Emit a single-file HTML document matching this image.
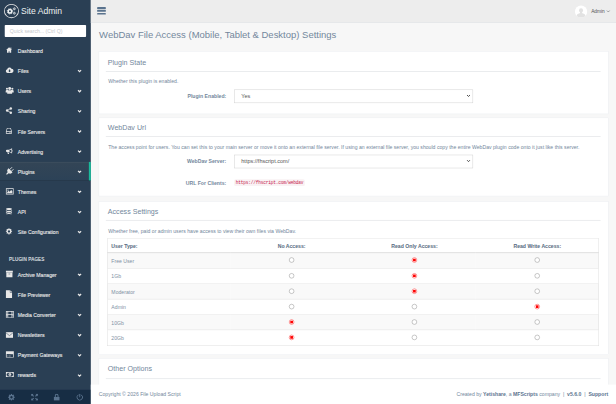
<!DOCTYPE html>
<html lang="en">
<head>
<meta charset="utf-8">
<title>Site Admin</title>
<style>
*{box-sizing:border-box}
html,body{margin:0;padding:0;width:616px;height:404px;overflow:hidden;background:#F7F7F7}
#stage{position:absolute;left:0;top:0;width:1560px;height:1023px;transform-origin:0 0;transform:scale(0.39487);font-family:"Liberation Sans",Arial,sans-serif;font-size:13px;color:#73879C;line-height:1.471;background:#F7F7F7;overflow:hidden}
/* sidebar */
#side{position:absolute;left:0;top:0;width:230px;height:1023px;background:#2A3F54;color:#ECF0F1}
.logo{position:absolute;left:10px;top:10px;height:38px;width:220px}
.logo .ic{position:absolute;left:0;top:0;width:38px;height:36px;border:2px solid #EAEAEA;border-radius:50%}.logo .ic svg{position:absolute;left:0;top:-1px}
.logo .tx{position:absolute;left:43px;top:-0.2px;font-size:21.8px;line-height:36px;color:#ECF0F1;white-space:nowrap}
.search{position:absolute;left:12px;top:63px;width:206px;height:31px;background:#fff;border-radius:2px;padding-left:13px;font-size:13px;line-height:31px;color:#C4C8CD}
ul.menu{position:absolute;left:0;top:104px;width:230px;margin:0;padding:0;list-style:none}
ul.menu li{position:relative;height:51px;font-size:13px;font-weight:bold;color:#E7E7E7}
ul.menu li .t{position:absolute;left:45px;top:1px;line-height:47px;white-space:nowrap;font-weight:normal;font-size:13px;-webkit-text-stroke:0.3px #E7E7E7}
ul.menu li svg.i{position:absolute;left:14px;top:12px;width:22px;height:22px;fill:#E7E7E7;overflow:visible}
ul.menu li svg.c{position:absolute;left:195px;top:18px;width:13px;height:13px;fill:none;stroke:#E7E7E7;stroke-width:2.8}
ul.menu li.act:before{content:"";position:absolute;left:0;top:0;width:225px;height:47px;background:linear-gradient(#334556,#2C4257);box-shadow:rgba(0,0,0,.25) 0 1px 0,inset rgba(255,255,255,.16) 0 1px 0;border-right:5px solid #1ABB9C}
h3.sec{position:absolute;left:23px;top:648px;margin:0;font-size:11.5px;letter-spacing:.4px;font-weight:normal;-webkit-text-stroke:.3px #E4E8EC;color:#E4E8EC;text-transform:uppercase;line-height:18px}
#m2{top:671px}
.sfoot{position:absolute;left:0;top:987px;width:230px;height:36px;background:#172D44}
.sfoot svg{position:absolute;fill:#5A738E}
/* top */
#top{position:absolute;left:230px;top:0;width:1330px;height:58px;background:#EDEDED;border-bottom:1px solid #D9DEE4}
.burger{position:absolute;left:16px;top:18px;width:22px;height:20px}
.burger i{display:block;height:4.6px;background:#5A738E;margin-bottom:2.7px;border-radius:1px}
.user{position:absolute;right:14px;top:18px;font-size:12.2px;color:#515356;line-height:20px}
.avatar{position:absolute;left:1226px;top:14px;width:31px;height:31px;border-radius:50%;background:#fff;overflow:hidden}
/* main */
h1.pt{position:absolute;left:251px;top:68px;margin:0;font-size:24px;font-weight:normal;color:#73879C;line-height:38px;white-space:nowrap}
.panel{position:absolute;left:250px;width:1291px;background:#fff;border:1px solid #E6E9ED}
.panel h2{position:absolute;left:22px;top:13px;margin:0;font-size:18px;font-weight:normal;line-height:26px;color:#73879C}
.panel .hr{position:absolute;left:17px;right:19px;top:48px;height:2px;background:#E5E7EA}
.panel p{position:absolute;left:23px;top:64.5px;margin:0;font-size:13px;white-space:nowrap;line-height:19px}
.lbl{position:absolute;width:302px;text-align:right;font-weight:bold;font-size:13px;line-height:20px;color:#73879C}
.sel{position:absolute;left:343px;width:603.5px;height:34px;border:1.6px solid #c6c6c6;background:#fff;font-size:14px;line-height:31px;padding-left:16px;color:#555}
.sel svg{position:absolute;right:5px;top:9px;width:11px;height:11px;fill:none;stroke:#444;stroke-width:2.7}
code{position:absolute;left:342px;font-family:"Liberation Mono",monospace;font-size:11.4px;letter-spacing:-0.5px;color:#C7254E;background:#F9F2F4;padding:1px 4px;border-radius:4px;line-height:15px}
table{position:absolute;left:20px;top:92px;width:1246px;border-collapse:collapse;font-size:13px;table-layout:fixed}
th,td{height:39.1px;width:25%;border-top:1px solid #ddd;padding:0 10px;text-align:center;vertical-align:middle}
table{border:1.5px solid #d6d6d6}
th{font-weight:bold;color:#5C7085;-webkit-text-stroke:.15px #5C7085;border-bottom:2.5px solid #d8d8d8;height:36px}
th:first-child,td:first-child{text-align:left;padding-left:10px}th{padding-top:2px}tr.f td{height:40.1px}
tr.o td{background:#F9F9F9}td{padding-top:2.5px;color:#7E90A3}
.r{position:relative;top:-3.2px;display:inline-block;width:13px;height:13px;border:1px solid #767676;border-radius:50%;background:#fff;vertical-align:middle}
.r.on{border:1.5px solid #FF0000;background:radial-gradient(circle,#FF0000 0,#FF0000 3.3px,#fff 3.8px)}
#foot{position:absolute;left:230px;top:974px;width:1330px;height:50px;background:#fff;font-size:13px;line-height:20px}
#foot .l{position:absolute;left:20px;top:14px}
#foot .rr{position:absolute;right:20px;top:14px}
#foot b{color:#5A738E}
</style>
</head>
<body>
<div id="stage">
  <div id="side">
    <div class="logo"><div class="ic"><svg viewBox="0 0 38 38" width="34" height="34"><g fill="none" stroke="#ECF0F1"><circle cx="14.7" cy="19.7" r="5" stroke-width="4.4"/><circle cx="14.7" cy="19.7" r="7.6" stroke-width="2.2" stroke-dasharray="3 3"/><circle cx="27.2" cy="12.6" r="2.3" stroke-width="2.3"/><circle cx="27.2" cy="12.6" r="3.6" stroke-width="1.2" stroke-dasharray="1.4 1.4"/><circle cx="27.2" cy="25" r="2.3" stroke-width="2.3"/><circle cx="27.2" cy="25" r="3.6" stroke-width="1.2" stroke-dasharray="1.4 1.4"/></g></svg></div><div class="tx">Site Admin</div></div>
    <div class="search">Quick search... (Ctrl Q)</div>
    <ul class="menu" id="m1">
      <li><svg class="i" viewBox="0 0 22 22"><path d="M9 3.8 L1.6 10.6 h2.100 V17.6 h4.300 v-3.800 h2 v3.800 h4.300 V10.600 h2.100 z M12.600 4.500 h2 v4 l-2 -1.900z"/></svg><span class="t">Dashboard</span></li>
      <li><svg class="i" viewBox="0 0 22 22"><path d="M5.5 17.7 A4.6 4.6 0 0 1 4.400 8.600 A5.700 5.700 0 0 1 15 7.100 A5.100 5.100 0 0 1 15 17.700 z"/><path d="M10.300 16 l-3.400 -3.900 h2.100 v-3.200 h2.600 v3.200 h2.100z" fill="#2A3F54"/></svg><span class="t">Files</span><svg class="c" viewBox="0 0 12 12"><path d="M2.4 4.200 l3.600 3.600 l3.600 -3.600"/></svg></li>
      <li><svg class="i" viewBox="0 0 22 22"><circle cx="10.500" cy="6.300" r="3.700"/><path d="M4.300 19.600 v-4.600 a4.400 4.400 0 0 1 4.400 -4.400 h3.600 a4.400 4.400 0 0 1 4.400 4.400 v4.600z"/><circle cx="3.700" cy="7" r="2.600"/><circle cx="17.300" cy="7" r="2.600"/><path d="M0.400 16.300 v-3.600 a3 3 0 0 1 3 -3 h3.600 v6.600z M20.600 16.300 v-3.600 a3 3 0 0 0 -3 -3 h-3.600 v6.600z"/></svg><span class="t">Users</span><svg class="c" viewBox="0 0 12 12"><path d="M2.4 4.200 l3.600 3.600 l3.600 -3.600"/></svg></li>
      <li><svg class="i" viewBox="0 0 22 22"><circle cx="4" cy="11" r="3.100"/><circle cx="13.400" cy="5.600" r="3.100"/><circle cx="13.400" cy="16.400" r="3.100"/><path d="M4 11 L13.400 5.600 M4 11 L13.400 16.400" stroke="#E7E7E7" stroke-width="1.900" fill="none"/></svg><span class="t">Sharing</span><svg class="c" viewBox="0 0 12 12"><path d="M2.4 4.200 l3.600 3.600 l3.600 -3.600"/></svg></li>
      <li><svg class="i" viewBox="0 0 22 22"><path d="M3.600 4 h9.800 l2.600 8.300 v6.200 h-15 v-6.200z M4.900 5.700 l-2 6.300 h11.200 l-2 -6.300z M2.700 13.700 v3.100 h11.600 v-3.100z M9.500 14.600 v1.300 h1.300 v-1.300z M11.700 14.600 v1.300 h1.300 v-1.300z" fill-rule="evenodd"/></svg><span class="t" style="top:3px">File Servers</span><svg class="c" viewBox="0 0 12 12"><path d="M2.4 4.200 l3.600 3.600 l3.600 -3.600"/></svg></li>
      <li><svg class="i" viewBox="0 0 22 22"><path d="M16.600 4.500 v13.500 l-7.600 -4 h-5.300 a2.600 2.600 0 0 1 -2.600 -2.600 v-.8 a2.600 2.600 0 0 1 2.600 -2.600 h5.300z M14.900 7.300 l-5 2.500 v2.800 l5 2.500z" fill-rule="evenodd"/><path d="M4.300 14.300 h3.400 l1.600 4.800 h-3.300z"/><rect x="17.200" y="9.300" width="1.500" height="3.600" rx=".7"/></svg><span class="t" style="top:3px">Advertising</span><svg class="c" viewBox="0 0 12 12"><path d="M2.4 4.200 l3.600 3.600 l3.600 -3.600"/></svg></li>
      <li class="act"><svg class="i" viewBox="0 0 22 22"><path d="M11 7 L15.800 2.200 M15 11.600 L19.400 7.200" stroke="#E7E7E7" stroke-width="2.300" stroke-linecap="round" fill="none"/><path d="M7.700 4.300 L17.700 14.300 L15.900 16.100 A6.400 6.400 0 0 1 8.200 16.900 L3.300 20.600 L1.600 18.900 L5.300 14 A6.400 6.400 0 0 1 5.900 6.100 z"/></svg><span class="t" style="top:3px">Plugins</span><svg class="c" viewBox="0 0 12 12"><path d="M2.4 4.200 l3.600 3.600 l3.600 -3.600"/></svg></li>
      <li><svg class="i" viewBox="0 0 22 22"><path d="M1 3.600 h19.500 v15.900 h-19.500z M2.800 5.400 v12.300 h15.900 v-12.300z" fill-rule="evenodd"/><path d="M4.200 16.400 v-2.600 l3.500 -3.500 l2.400 2.400 l4.300 -4.700 l2.900 3.400 v5z"/><circle cx="6.400" cy="8.400" r="1.600"/></svg><span class="t" style="top:3px">Themes</span><svg class="c" viewBox="0 0 12 12"><path d="M2.4 4.200 l3.600 3.600 l3.600 -3.600"/></svg></li>
      <li><svg class="i" viewBox="0 0 22 22"><ellipse cx="8.750" cy="5.400" rx="7.750" ry="2.900"/><path d="M1 7.600 a7.750 2.900 0 0 0 15.500 0 v2.900 a7.750 2.900 0 0 1 -15.500 0z M1 12.200 a7.750 2.900 0 0 0 15.500 0 v2.900 a7.750 2.900 0 0 1 -15.500 0z M1 16.800 a7.750 2.900 0 0 0 15.500 0 v.4 a7.750 2.900 0 0 1 -15.500 0z"/></svg><span class="t">API</span><svg class="c" viewBox="0 0 12 12"><path d="M2.4 4.200 l3.600 3.600 l3.600 -3.600"/></svg></li>
      <li><svg class="i" viewBox="0 0 22 22"><path d="M7.37 4.86 L7.45 3.01 L10.05 3.01 L10.13 4.86 L11.98 5.62 L13.34 4.37 L15.18 6.21 L13.93 7.57 L14.69 9.42 L16.54 9.50 L16.54 12.10 L14.69 12.18 L13.93 14.03 L15.18 15.39 L13.34 17.23 L11.98 15.98 L10.13 16.74 L10.05 18.59 L7.45 18.59 L7.37 16.74 L5.52 15.98 L4.16 17.23 L2.32 15.39 L3.57 14.03 L2.81 12.18 L0.96 12.10 L0.96 9.50 L2.81 9.42 L3.57 7.57 L2.32 6.21 L4.16 4.37 L5.52 5.62z M8.75 7.90 a2.90 2.90 0 1 0 0.01 0z" fill-rule="evenodd"/></svg><span class="t">Site Configuration</span><svg class="c" viewBox="0 0 12 12"><path d="M2.4 4.200 l3.600 3.600 l3.600 -3.600"/></svg></li>
    </ul>
    <h3 class="sec">Plugin Pages</h3>
    <ul class="menu" id="m2">
      <li><svg class="i" viewBox="0 0 22 22"><path d="M1 2.600 h17.500 v4.400 h-17.500z M2 7.600 h15.500 v11.400 h-15.500z M7.600 10 v1.500 h4.300 v-1.500z" fill-rule="evenodd"/></svg><span class="t" style="top:3px">Archive Manager</span><svg class="c" viewBox="0 0 12 12"><path d="M2.4 4.200 l3.600 3.600 l3.600 -3.600"/></svg></li>
      <li><svg class="i" viewBox="0 0 22 22"><path d="M1 1 h10 v5.500 h5.500 v14 h-15.500z M12 1 l4.500 4.500 h-4.500z"/></svg><span class="t">File Previewer</span><svg class="c" viewBox="0 0 12 12"><path d="M2.4 4.200 l3.600 3.600 l3.600 -3.600"/></svg></li>
      <li><svg class="i" viewBox="0 0 22 22"><path d="M1 2.600 h20 v17.300 h-20z M2.600 4.200 v2.600 h2.500 v-2.600z M2.600 8.500 v2 h2.500 v-2z M2.600 12.200 v2 h2.500 v-2z M2.600 15.800 v2.500 h2.500 v-2.500z M16.900 4.200 v2.600 h2.500 v-2.600z M16.900 8.500 v2 h2.500 v-2z M16.900 12.200 v2 h2.500 v-2z M16.900 15.800 v2.500 h2.500 v-2.500z M6.800 4.200 v6 h8.400 v-6z M6.800 12.300 v6 h8.400 v-6z" fill-rule="evenodd"/></svg><span class="t">Media Converter</span><svg class="c" viewBox="0 0 12 12"><path d="M2.4 4.200 l3.600 3.600 l3.600 -3.600"/></svg></li>
      <li><svg class="i" viewBox="0 0 22 22"><path d="M1 5.200 h18 v14.300 h-18z"/><path d="M1.300 7 l8.700 7 l8.700 -7" fill="none" stroke="#2A3F54" stroke-width="1.300"/></svg><span class="t">Newsletters</span><svg class="c" viewBox="0 0 12 12"><path d="M2.4 4.200 l3.600 3.600 l3.600 -3.600"/></svg></li>
      <li><svg class="i" viewBox="0 0 22 22"><path d="M1 2.600 h20 v16 h-20z M2.800 9.500 v7.300 h16.400 v-6.600z M4.500 13.700 v1.600 h3 v-1.600z M8.800 13.700 v1.600 h4.200 v-1.600z" fill-rule="evenodd"/></svg><span class="t">Payment Gateways</span><svg class="c" viewBox="0 0 12 12"><path d="M2.4 4.200 l3.600 3.600 l3.600 -3.600"/></svg></li>
      <li><svg class="i" viewBox="0 0 22 22"><path d="M1 4.100 h20 v12.800 h-20z M2.700 5.800 v9.400 h16.600 v-9.400z M11 6.700 a3.500 3.800 0 1 0 .01 0z M10 8.500 v.9 h.6 v2.300 h-.7 v.9 h2.300 v-.9 h-.6 v-3.200z M2.700 8.300 a2.500 2.500 0 0 0 2.500 -2.500 h-2.500z M19.300 8.300 a2.500 2.500 0 0 1 -2.500 -2.500 h2.500z M2.700 12.700 a2.500 2.500 0 0 1 2.500 2.500 h-2.500z M19.300 12.700 a2.500 2.500 0 0 0 -2.500 2.500 h2.500z" fill-rule="evenodd"/></svg><span class="t">rewards</span><svg class="c" viewBox="0 0 12 12"><path d="M2.4 4.200 l3.600 3.600 l3.600 -3.600"/></svg></li>
    </ul>
    <div class="sfoot">
      <svg style="left:19.500px;top:9.500px;width:18px;height:18px" viewBox="0 0 20 20"><path d="M8.33 2.79 L8.42 0.53 L11.58 0.53 L11.67 2.79 L13.92 3.72 L15.58 2.19 L17.81 4.42 L16.28 6.08 L17.21 8.33 L19.47 8.42 L19.47 11.58 L17.21 11.67 L16.28 13.92 L17.81 15.58 L15.58 17.81 L13.92 16.28 L11.67 17.21 L11.58 19.47 L8.42 19.47 L8.33 17.21 L6.08 16.28 L4.42 17.81 L2.19 15.58 L3.72 13.92 L2.79 11.67 L0.53 11.58 L0.53 8.42 L2.79 8.33 L3.72 6.08 L2.19 4.42 L4.42 2.19 L6.08 3.72z M10.00 6.60 a3.40 3.40 0 1 0 0.01 0z" fill-rule="evenodd"/></svg>
      <svg style="left:77.500px;top:9.500px;width:19px;height:18px" viewBox="0 0 20 20"><path d="M0.500 0.500 h7 l-2.300 2.300 l3.400 3.400 l-2.400 2.400 l-3.400 -3.400 l-2.300 2.300z M19.500 0.500 v7 l-2.300 -2.300 l-3.400 3.400 l-2.400 -2.400 l3.400 -3.400 l-2.300 -2.300z M0.500 19.500 v-7 l2.300 2.300 l3.400 -3.400 l2.400 2.400 l-3.400 3.400 l2.300 2.300z M19.500 19.500 h-7 l2.300 -2.300 l-3.400 -3.400 l2.400 -2.400 l3.400 3.400 l2.300 -2.300z"/></svg>
      <svg style="left:135px;top:9.500px;width:17px;height:18px" viewBox="0 0 18 20"><path d="M1 9 h16 v10.500 h-16z M3.800 9 v-3.300 a5.200 5.200 0 0 1 10.400 0 v3.300 h-2.700 v-3.300 a2.500 2.500 0 0 0 -5 0 v3.300z"/></svg>
      <svg style="left:192.500px;top:9.500px;width:18px;height:18px" viewBox="0 0 20 20"><path d="M8.700 0.500 h2.600 v9.500 h-2.600z"/><path d="M5.300 3.600 a8 8 0 1 0 9.400 0" fill="none" stroke="#5A738E" stroke-width="2.600" stroke-linecap="round"/></svg>
    </div>
  </div>

  <div id="top">
    <div class="burger"><i></i><i></i><i></i></div>
    <div class="avatar"><svg viewBox="0 0 29 29" width="31" height="31"><circle cx="14.500" cy="11.500" r="4.800" fill="#E2E2E2"/><path d="M12 14 h5 v3.500 c2 1.500 7 1.500 8 6 v6 h-21 v-6 c1 -4.500 6 -4.500 8 -6z" fill="#E2E2E2"/></svg></div>
    <div class="user">Admin <svg width="11" height="11" viewBox="0 0 12 12" style="fill:none;stroke:#515356;stroke-width:1.500;vertical-align:-2px"><path d="M2 4 l4 4 l4 -4"/></svg></div>
  </div>

  <h1 class="pt">WebDav File Access (Mobile, Tablet &amp; Desktop) Settings</h1>

  <div class="panel" style="top:130px;height:158.5px">
    <h2 style="top:14px">Plugin State</h2><div class="hr" style="top:49px"></div>
    <p>Whether this plugin is enabled.</p>
    <div class="lbl" style="left:20px;top:103px">Plugin Enabled:</div>
    <div class="sel" style="top:95.5px">Yes<svg viewBox="0 0 12 12"><path d="M2 4 l4 4 l4 -4"/></svg></div>
  </div>

  <div class="panel" style="top:298px;height:199px">
    <h2 style="top:10px">WebDav Url</h2><div class="hr" style="top:45.5px"></div>
    <p style="top:64.5px">The access point for users. You can set this to your main server or move it onto an external file server. If using an external file server, you should copy the entire WebDav plugin code onto it just like this server.</p>
    <div class="lbl" style="left:20px;top:101px">WebDav Server:</div>
    <div class="sel" style="top:93px">https://fhscript.com/<svg viewBox="0 0 12 12"><path d="M2 4 l4 4 l4 -4"/></svg></div>
    <div class="lbl" style="left:20px;top:155px">URL For Clients:</div>
    <code style="top:154.5px">https://fhscript.com/webdav</code>
  </div>

  <div class="panel" style="top:510px;height:388.5px">
    <h2>Access Settings</h2><div class="hr" style="top:46px"></div>
    <p style="top:63.5px">Whether free, paid or admin users have access to view their own files via WebDav.</p>
    <table>
      <tr><th>User Type:</th><th>No Access:</th><th>Read Only Access:</th><th>Read Write Access:</th></tr>
      <tr class="o f"><td>Free User</td><td><span class="r"></span></td><td><span class="r on"></span></td><td><span class="r"></span></td></tr>
      <tr><td>1Gb</td><td><span class="r"></span></td><td><span class="r on"></span></td><td><span class="r"></span></td></tr>
      <tr class="o"><td>Moderator</td><td><span class="r"></span></td><td><span class="r on"></span></td><td><span class="r"></span></td></tr>
      <tr><td>Admin</td><td><span class="r"></span></td><td><span class="r"></span></td><td><span class="r on"></span></td></tr>
      <tr class="o"><td>10Gb</td><td><span class="r on"></span></td><td><span class="r"></span></td><td><span class="r"></span></td></tr>
      <tr><td>20Gb</td><td><span class="r on"></span></td><td><span class="r"></span></td><td><span class="r"></span></td></tr>
    </table>
  </div>

  <div class="panel" style="top:907px;height:200px">
    <h2 style="top:12.5px">Other Options</h2><div class="hr" style="top:50px"></div>
  </div>

  <div id="foot">
    <div class="l">Copyright &copy; 2026 File Upload Script</div>
    <div class="rr">Created by <b>Yetishare</b>, a <b>MFScripts</b> company &nbsp;|&nbsp; <b>v5.6.0</b> &nbsp;|&nbsp; <b>Support</b></div>
  </div>
</div>
</body>
</html>
